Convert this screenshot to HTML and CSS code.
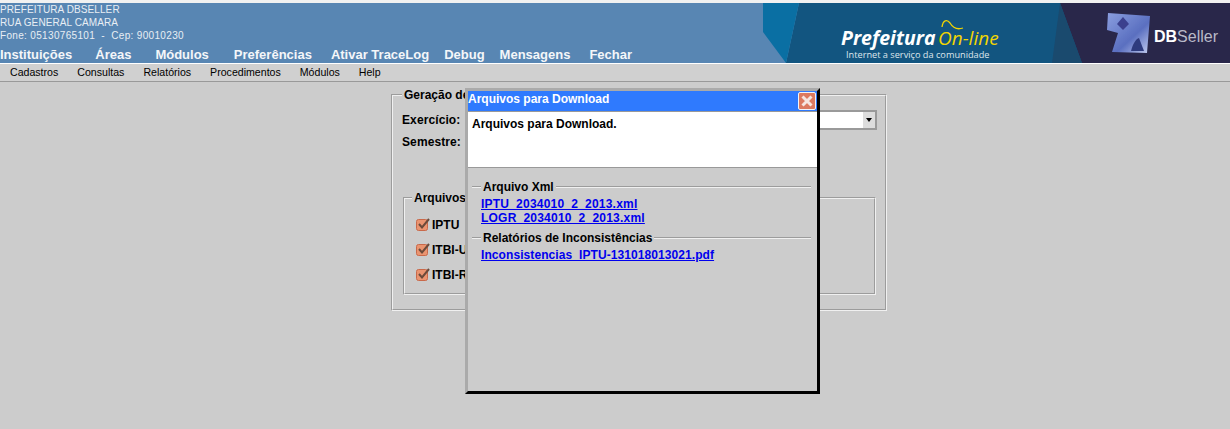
FILE: index.html
```html
<!DOCTYPE html>
<html lang="pt-BR">
<head>
    <meta charset="UTF-8">
    <title>Arquivos para Download</title>
    <link rel="stylesheet" href="styles.css">
</head>
<body>
    <header class="topo">
        <div class="topo-info">
            <div class="instituicao">
                PREFEITURA DBSELLER<br>
                RUA GENERAL CAMARA<br>
                <span class="fone">Fone: 05130765101&nbsp; - &nbsp;Cep: 90010230</span>
            </div>
            <nav class="menu-principal">
                <a href="#" class="m1">Instituições</a>
                <a href="#" class="m2">Áreas</a>
                <a href="#" class="m3">Módulos</a>
                <a href="#" class="m4">Preferências</a>
                <a href="#" class="m5">Ativar TraceLog</a>
                <a href="#" class="m6">Debug</a>
                <a href="#" class="m7">Mensagens</a>
                <a href="#">Fechar</a>
            </nav>
        </div>
        <svg class="banner" width="467" height="60" viewBox="0 0 467 60">
            <defs>
                <linearGradient id="cubo" x1="0" y1="0" x2="1" y2="1">
                    <stop offset="0" stop-color="#8b9fe0"/>
                    <stop offset="0.6" stop-color="#5a6fc0"/>
                    <stop offset="1" stop-color="#c3cdf0"/>
                </linearGradient>
                <filter id="borrao"><feGaussianBlur stdDeviation="0.7"/></filter>
            </defs>
            <polygon points="297,0 467,0 467,60 289,60" fill="#29274a"/>
            <polygon points="36,0 297,0 319,60 23,60" fill="#125580"/>
            <polygon points="0,0 36,0 23,60 0,29" fill="#0a6fa3"/>
            <polygon points="297,0 319,60 289,60" fill="#1a4a6e"/>
            <text x="78" y="42" class="logo-pref">Prefeitura</text>
            <text x="175" y="42" class="logo-online">On-line</text>
            <path d="M179 24 C180 17 184 16 187 20 C190 25 194 27 200 25" fill="none" stroke="#f2d500" stroke-width="1.3"/>
            <text x="83" y="55" class="logo-sub">Internet a serviço da comunidade</text>
            <g filter="url(#borrao)">
                <polygon points="345,10 387,13 384,50 349,49 355,30 344,27" fill="url(#cubo)"/>
                <polygon points="360,14 366,21 360,27 354,21" fill="#3a3f8e"/>
                <path d="M368 48 C370 40 373 36 376 35 L381 48 Z" fill="#2f3a7e"/>
            </g>
            <text x="391" y="39" class="logo-db">DB<tspan class="logo-seller">Seller</tspan></text>
        </svg>
    </header>

    <nav class="menu-sec">
        <a href="#" class="s1">Cadastros</a>
        <a href="#" class="s2">Consultas</a>
        <a href="#" class="s3">Relatórios</a>
        <a href="#" class="s4">Procedimentos</a>
        <a href="#" class="s5">Módulos</a>
        <a href="#">Help</a>
    </nav>

    <main class="conteudo">
        <fieldset class="form-box">
            <legend>Geração de</legend>
            <div class="linha">
                <label>Exercício:</label>
                <div class="combo"><span class="combo-seta"></span></div>
            </div>
            <div class="linha linha-sem">
                <label>Semestre:</label>
            </div>
            <fieldset class="arquivos">
                <legend>Arquivos</legend>
                <div class="check">
                    <svg width="14" height="14" viewBox="0 0 14 14"><rect x="0.5" y="1.5" width="11" height="11" rx="2" fill="#ea9470" stroke="#c9694a"/><path d="M3 6 L6 9.5 L13 1" fill="none" stroke="#6b4a3a" stroke-width="2"/></svg>
                    <span>IPTU</span>
                </div>
                <div class="check">
                    <svg width="14" height="14" viewBox="0 0 14 14"><rect x="0.5" y="1.5" width="11" height="11" rx="2" fill="#ea9470" stroke="#c9694a"/><path d="M3 6 L6 9.5 L13 1" fill="none" stroke="#6b4a3a" stroke-width="2"/></svg>
                    <span>ITBI-U</span>
                </div>
                <div class="check">
                    <svg width="14" height="14" viewBox="0 0 14 14"><rect x="0.5" y="1.5" width="11" height="11" rx="2" fill="#ea9470" stroke="#c9694a"/><path d="M3 6 L6 9.5 L13 1" fill="none" stroke="#6b4a3a" stroke-width="2"/></svg>
                    <span>ITBI-R</span>
                </div>
            </fieldset>
        </fieldset>
    </main>

    <div class="janela">
        <div class="janela-titulo">
            <span>Arquivos para Download</span>
            <button class="fechar" type="button">
                <svg width="12" height="12" viewBox="0 0 12 12"><path d="M1.5 1.5 L10.5 10.5 M10.5 1.5 L1.5 10.5" stroke="#f6e6e0" stroke-width="3"/></svg>
            </button>
        </div>
        <div class="janela-msg">Arquivos para Download.</div>
        <div class="janela-corpo">
            <fieldset class="grupo">
                <legend>Arquivo Xml</legend>
                <a href="#" class="link-xml">IPTU_2034010_2_2013.xml</a>
                <a href="#" class="link-xml">LOGR_2034010_2_2013.xml</a>
            </fieldset>
            <fieldset class="grupo">
                <legend>Relatórios de Inconsistências</legend>
                <a href="#" class="link-pdf">Inconsistencias_IPTU-131018013021.pdf</a>
            </fieldset>
        </div>
    </div>
</body>
</html>
```

FILE: styles.css
```css
html, body {
    margin: 0;
    height: 100%;
}

body {
    background-color: #cccccc;
    font-family: "Liberation Sans", Arial, sans-serif;
    font-size: 12px;
    color: #000;
    overflow: hidden;
}

.topo {
    display: flex;
    justify-content: space-between;
    height: 60px;
    background-color: #5886b3;
    border-top: 3px solid #f1f1f1;
    border-bottom: 1px solid #fff;
}

.instituicao {
    font-size: 10px;
    line-height: 13px;
    letter-spacing: 0.1px;
    color: #e8eef4;
}

.fone {
    letter-spacing: 0.33px;
}

.menu-principal {
    display: flex;
    margin-top: 6px;
    font-size: 13px;
    font-weight: bold;
    line-height: 14px;
}

.menu-principal a {
    color: #f4f6f9;
    text-decoration: none;
}

.m1 { margin-right: 23px; }
.m2 { margin-right: 24px; }
.m3 { margin-right: 25px; }
.m4 { margin-right: 19px; }
.m5 { margin-right: 15px; }
.m6 { margin-right: 15px; }
.m7 { margin-right: 19px; }

.banner {
    display: block;
    flex: none;
}

.logo-pref {
    font: italic bold 19.5px "Open Sans", sans-serif;
    fill: #fff;
}

.logo-online {
    font: italic 19px "Open Sans", sans-serif;
    fill: #f2d500;
}

.logo-sub {
    font: 9.2px "Open Sans", sans-serif;
    fill: #dfe6ec;
}

.logo-db {
    font: bold 16px "Liberation Sans", sans-serif;
    fill: #fff;
}

.logo-seller {
    font-weight: normal;
    fill: #b9bac8;
}

.menu-sec {
    display: flex;
    height: 17px;
    padding-left: 10px;
    background-color: #d0d0d0;
    border-bottom: 1px solid #999;
    font-size: 10.6px;
    line-height: 17px;
}

.menu-sec a {
    color: #000;
    text-decoration: none;
}

.s1 { margin-right: 19px; }
.s2 { margin-right: 19px; }
.s3 { margin-right: 19px; }
.s4 { margin-right: 19px; }
.s5 { margin-right: 19px; }

.conteudo {
    padding: 6px 0 0 391px;
}

.form-box {
    box-sizing: border-box;
    width: 496px;
    height: 223px;
    margin: 0;
    padding: 8px 8px 0 9px;
    border: 2px groove #f0f0f0;
}

.form-box legend,
.arquivos legend {
    padding: 0 2px;
    font-weight: bold;
    font-size: 12px;
}

.linha {
    display: flex;
    justify-content: space-between;
    height: 22px;
    font-weight: bold;
    letter-spacing: 0.1px;
}

.linha-sem {
    height: 59px;
}

.linha label {
    line-height: 20px;
}

.combo {
    box-sizing: border-box;
    width: 330px;
    height: 20px;
    background-color: #fff;
    border: 2px solid #9a9a9a;
    display: flex;
    justify-content: flex-end;
}

.combo-seta {
    width: 12px;
    background-color: #ddd;
    position: relative;
}

.combo-seta::after {
    content: "";
    position: absolute;
    left: 3px;
    top: 6px;
    border: 3px solid transparent;
    border-top: 4px solid #000;
    border-bottom: 0;
}

.arquivos {
    box-sizing: border-box;
    width: 473px;
    height: 104px;
    margin: 0 0 0 1px;
    padding: 7px 0 0 7px;
    border: 2px groove #f0f0f0;
}

.check {
    display: flex;
    align-items: center;
    gap: 2px;
    height: 25px;
    margin-left: 4px;
    font-weight: bold;
}

.janela {
    box-sizing: border-box;
    position: absolute;
    left: 465px;
    top: 88px;
    width: 355px;
    height: 306px;
    background-color: #cccccc;
    border-style: solid;
    border-width: 3px;
    border-color: #aaaaaa #000 #000 #aaaaaa;
    display: flex;
    flex-direction: column;
}

.janela-titulo {
    box-sizing: border-box;
    display: flex;
    justify-content: space-between;
    align-items: flex-start;
    flex: none;
    height: 21px;
    background-color: #2f7afe;
    border-bottom: 1px solid #999;
    color: #fff;
    font-weight: bold;
    line-height: 17px;
}

.fechar {
    box-sizing: border-box;
    display: flex;
    align-items: center;
    justify-content: center;
    width: 18px;
    height: 18px;
    margin: 1px 1px 0 0;
    padding: 0;
    background-color: #dc7a60;
    border: 1px solid #f0f4fa;
    border-radius: 2px;
}

.janela-msg {
    box-sizing: border-box;
    flex: none;
    height: 56px;
    padding: 5px 4px;
    background-color: #fff;
    border-bottom: 1px solid #999;
    font-weight: bold;
    line-height: 14px;
}

.janela-corpo {
    padding: 12px 6px 0 4px;
}

.grupo {
    margin: 0 0 6px;
    padding: 3px 0 0 9px;
    border: 0;
    border-top: 2px groove #f0f0f0;
}

.grupo legend {
    padding: 0 2px;
    font-weight: bold;
}

.grupo a {
    display: block;
    color: #0000ee;
    font-weight: bold;
    line-height: 14px;
}

.grupo .link-xml {
    letter-spacing: 0.22px;
}

.grupo .link-pdf {
    letter-spacing: 0.08px;
}
```
